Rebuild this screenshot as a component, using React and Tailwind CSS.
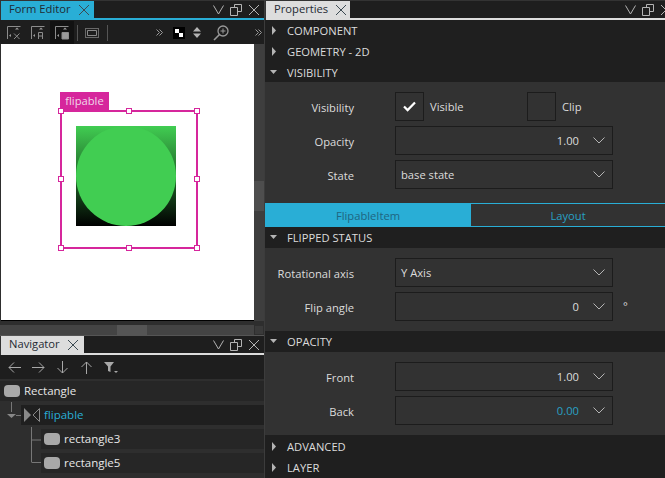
const FONT = "font-['Open_Sans','Noto_Sans',sans-serif]"

function Cross({ className = "" }) {
  return (
    <svg width="12" height="12" viewBox="0 0 12 12" className={className} fill="none" stroke="currentColor" strokeWidth="1">
      <path d="M1 1l10 10M11 1L1 11" />
    </svg>
  )
}

function Chevron() {
  return (
    <svg width="12" height="7" viewBox="0 0 12 7" fill="none" stroke="#b4b4b4" className="ml-[14px] mr-[7px] shrink-0">
      <path d="M.5.5L6 6l5.500-5.500" />
    </svg>
  )
}

function DockButtons({ clipped }) {
  return (
    <div className={`ml-auto flex items-center gap-[6px] self-center text-[#b4b4b4] ${clipped ? "-mr-[7px]" : "pr-[4px]"}`}>
      <svg width="11" height="10" viewBox="0 0 11 10" fill="none" stroke="currentColor">
        <path d="M.5.5L5.500 9l5-8.500" />
      </svg>
      <svg width="12" height="12" viewBox="0 0 12 12" fill="none" stroke="currentColor">
        <path d="M.5 3.500h7v8h-7zM4.500 3V.5h7v7H8" />
      </svg>
      <Cross />
    </div>
  )
}

function Tab({ label, active, width }) {
  return (
    <div className={`flex h-[17px] shrink-0 items-center gap-[7px] pl-[8px] text-[11.2px] text-[#1f2a33] ${width} ${active ? "bg-[#29aed6]" : "bg-[#dddddd]"}`}>
      <span>{label}</span>
      <Cross className="text-[#3c4a52]" />
    </div>
  )
}

function TitleBar({ label, active, width, clipped, flush }) {
  return (
    <div className={`shrink-0 bg-[#333333] pl-px ${flush ? "" : "pt-px"}`}>
      <div className={`flex h-[19px] items-start border-b-2 bg-[#1e1e1e] ${active ? "border-[#29aed6]" : "border-[#dddddd]"}`}>
        <Tab label={label} active={active} width={width} />
        <DockButtons clipped={clipped} />
      </div>
    </div>
  )
}

function Section({ label, open, h = "h-[21px]" }) {
  return (
    <div className={`flex shrink-0 items-center bg-[#1f1f1f] pl-[5px] text-[11.2px] text-[#dcdcdc] ${h}`}>
      <span className="flex w-[17px] items-center">
        {open ? (
          <svg width="7" height="5" viewBox="0 0 7 5"><path d="M0 0h7L3.500 4z" fill="#b4b4b4" /></svg>
        ) : (
          <svg width="5" height="9" viewBox="0 0 5 9" className="ml-[2px]"><path d="M0 0l4 4.500L0 9z" fill="#b4b4b4" /></svg>
        )}
      </span>
      <span className="pt-[2px]">{label}</span>
    </div>
  )
}

function Field({ value, left, blue }) {
  return (
    <div className="flex h-[29px] w-[218px] items-center border border-[#1c1c1c] text-[11.2px]">
      {left ? <span className="pl-[5px] pt-[2px] text-[#dcdcdc]">{value}</span> : null}
      <span className={`ml-auto pt-[2px] ${blue ? "text-[#29a0c4]" : "text-[#dcdcdc]"}`}>{left ? "" : value}</span>
      <Chevron />
    </div>
  )
}

function Row({ label, children }) {
  return (
    <div className="flex h-[29px] items-center">
      <span className="w-[89px] pt-[3px] text-right text-[11.2px] text-[#dcdcdc]">{label}</span>
      <div className="ml-[41px] flex items-center">{children}</div>
    </div>
  )
}

function CheckBox({ checked }) {
  return (
    <div className="flex h-[29px] w-[29px] items-center justify-center border border-[#1c1c1c]">
      {checked ? (
        <svg width="13" height="11" viewBox="0 0 13 11" fill="none" stroke="#ffffff" strokeWidth="2.200">
          <path d="M1 5.500l3.600 3.600L12 1.500" />
        </svg>
      ) : null}
    </div>
  )
}

function Handle({ className }) {
  return <div className={`absolute h-[6px] w-[6px] border border-[#d6269c] bg-white ${className}`} />
}

function ToolIcon({ glyph, dark }) {
  return (
    <div className={`flex h-[23px] w-[24px] items-center justify-center ${dark ? "bg-[#121212]" : ""}`}>
      <svg width="14" height="14" viewBox="0 0 14 14" fill="none" stroke="#8c8c8c">
        <path d="M.5 13V.5h13" />
        <path d="M4 8L2 9.500 4 11z" fill="#9a9a9a" stroke="none" />
        <path d="M10 1.500l2 2H8z" fill="#9a9a9a" stroke="none" />
        {glyph === "x" && <path d="M7 7.500l5.500 5.500M12.500 7.500L7 13" />}
        {glyph === "a" && <path d="M7.500 13V6.500h4V13M7.500 10h4" />}
        {glyph === "b" && <path d="M7 6.500h6.500V13H7z" fill="#9a9a9a" />}
      </svg>
    </div>
  )
}

function FormEditor() {
  return (
    <div className="flex h-[336px] shrink-0 flex-col">
      <TitleBar label="Form Editor" active width="w-[93px]" />
      <div className="flex h-[24px] shrink-0 items-center bg-[#1e1e1e] pl-[2px] pt-px">
        <ToolIcon glyph="x" />
        <ToolIcon glyph="a" />
        <ToolIcon glyph="b" dark />
        <div className="ml-[3px] h-[16px] w-px bg-[#555555]" />
        <svg width="14" height="10" viewBox="0 0 14 10" fill="none" stroke="#b4b4b4" className="ml-[7px]">
          <path d="M.5.5h13v9H.5z" strokeDasharray="1 1" />
          <path d="M2.500 2.500h9v5h-9z" stroke="#8a8a8a" />
        </svg>
        <div className="ml-[8px] h-[16px] w-px bg-[#555555]" />
        <svg width="7" height="7" viewBox="0 0 7 7" fill="none" stroke="#9a9a9a" className="ml-[48px]">
          <path d="M.5.5l3 3-3 3M3.500.5l3 3-3 3" />
        </svg>
        <svg width="12" height="12" viewBox="0 0 12 12" className="ml-[10px]">
          <path d="M0 0h12v12H0z" fill="#000000" />
          <path d="M2 2h4v4H2zM6 6h4v4H6z" fill="#ffffff" />
        </svg>
        <svg width="8" height="11" viewBox="0 0 8 11" className="ml-[8px]" fill="#b4b4b4">
          <path d="M4 0l4 4.500H0zM0 6.500h8L4 11z" />
        </svg>
        <svg width="16" height="16" viewBox="0 0 16 16" fill="none" stroke="#9a9a9a" className="ml-[12px]">
          <circle cx="10" cy="6" r="5" strokeWidth="1.300" />
          <path d="M6.500 9.500L1 15" strokeWidth="1.600" />
          <path d="M7.500 6h5M10 3.500v5" />
        </svg>
        <svg width="7" height="7" viewBox="0 0 7 7" fill="none" stroke="#9a9a9a" className="ml-auto mr-[2px]">
          <path d="M.5.5l3 3-3 3M3.500.5l3 3-3 3" />
        </svg>
      </div>
      <div className="flex min-h-0 flex-1 flex-col">
        <div className="flex h-[277px] shrink-0">
          <div className="relative ml-px flex-1 border-b border-black bg-white">
            <div className="absolute left-[59px] top-[48px] flex h-[18px] w-[49px] items-center justify-center bg-[#d6269c] text-[11.2px] text-[#f0d8e8]">flipable</div>
            <div className="absolute left-[59px] top-[66px] h-[139px] w-[138px] border-2 border-[#d6269c]">
              <Handle className="-left-[4px] -top-[4px]" />
              <Handle className="left-[64px] -top-[4px]" />
              <Handle className="-right-[4px] -top-[4px]" />
              <Handle className="-left-[4px] top-[64px]" />
              <Handle className="-right-[4px] top-[64px]" />
              <Handle className="-left-[4px] -bottom-[4px]" />
              <Handle className="left-[64px] -bottom-[4px]" />
              <Handle className="-right-[4px] -bottom-[4px]" />
            </div>
            <div className="absolute left-[75px] top-[82px] flex h-[100px] w-[100px] bg-linear-to-b/srgb from-[#41cd52] to-black">
              <div className="h-[100px] w-[100px] rounded-full bg-[#41cd52]" />
            </div>
          </div>
          <div className="flex w-[10px] shrink-0 flex-col bg-[#3e3e3e]">
            <div className="mt-[137px] h-[30px] bg-[#4e4e4e]" />
          </div>
        </div>
        <div className="flex min-h-0 flex-1 flex-col bg-[#2e2e2e] pt-[4px]">
          <div className="flex h-[10px] shrink-0 bg-[#444444]">
            <div className="ml-[117px] h-full w-[30px] bg-[#555555]" />
            <div className="ml-auto h-full w-[10px] border border-[#2e2e2e] bg-[#3a3a3a]" />
          </div>
          <div className="h-px shrink-0 bg-[#555555]" />
        </div>
      </div>
    </div>
  )
}

function NavRow({ label, indent, icon, blue }) {
  return (
    <div className={`flex h-[20px] items-center bg-[#262626] ${indent}`}>
      {icon}
      <span className={`text-[11.5px] ${blue ? "text-[#29aed6]" : "text-[#e6e6e6]"}`}>{label}</span>
    </div>
  )
}

function Pill() {
  return <div className="mr-[4px] h-[12px] w-[16px] rounded-[4px] bg-[#a8a8a8]" />
}

function Navigator() {
  return (
    <div className="relative flex min-h-0 flex-1 flex-col bg-[#2e2e2e]">
      <TitleBar label="Navigator" width="w-[83px]" flush />
      <div className="flex h-[24px] shrink-0 items-center gap-[11px] bg-[#1e1e1e] pl-[8px] text-[#a8a8a8]">
        {["M13 6.500H1M6 1.500l-5 5 5 5", "M0 6.500h12M7 1.500l5 5-5 5", "M6.500 0v12M1.500 7l5 5 5-5", "M6.500 13V1M1.500 6l5-5 5 5"].map((d) => (
          <svg key={d} width="13" height="13" viewBox="0 0 13 13" fill="none" stroke="currentColor"><path d={d} /></svg>
        ))}
        <svg width="14" height="13" viewBox="0 0 14 13" fill="#a8a8a8"><path d="M0 1h10L6.500 5.500V11L4 10V5.500zM10 10h4l-2 2z" /></svg>
      </div>
      <div className="mt-[2px] flex flex-col gap-[4px]">
        <NavRow label="Rectangle" indent="pl-[4px]" icon={<Pill />} />
        <div className="relative pl-[21px]">
          <svg width="15" height="20" viewBox="0 0 15 20" className="absolute left-[6px] top-[-3px]" fill="none" stroke="#777777">
            <path d="M5.500 0v10M10 13.500h5" />
            <path d="M1 12h9l-4.500 4z" fill="#888888" stroke="none" />
          </svg>
          <NavRow
            label="flipable"
            indent="!bg-[#1f1f1f] pl-[3px]"
            blue
            icon={
              <svg width="17" height="16" viewBox="0 0 17 16" className="mr-[3px]" fill="none">
                <path d="M0 1l7 7-7 7z" fill="#888888" />
                <path d="M15.500 1.500L9 8l6.500 6.500z" stroke="#888888" />
              </svg>
            }
          />
        </div>
        <div className="relative flex flex-col gap-[4px] pl-[41px]">
          <svg width="12" height="40" viewBox="0 0 12 40" className="absolute left-[31px] -top-[2px]" fill="none" stroke="#777777">
            <path d="M.5 0v35M.5 13H10M.5 35.500H10" />
          </svg>
          <NavRow label="rectangle3" indent="pl-[3px]" icon={<Pill />} />
          <NavRow label="rectangle5" indent="pl-[3px]" icon={<Pill />} />
        </div>
      </div>
    </div>
  )
}

function Properties() {
  return (
    <div className="flex min-w-0 flex-1 flex-col bg-[#323232]">
      <TitleBar label="Properties" width="w-[84px]" clipped />
      <Section label="COMPONENT" />
      <Section label="GEOMETRY - 2D" />
      <Section label="VISIBILITY" open h="h-[20px]" />
      <div className="flex h-[121px] shrink-0 flex-col gap-[5px] pt-[10px]">
        <Row label="Visibility">
          <CheckBox checked />
          <span className="ml-[6px] w-[97px] pt-[2px] text-[11.2px] text-[#dcdcdc]">Visible</span>
          <CheckBox />
          <span className="ml-[6px] pt-[2px] text-[11.2px] text-[#dcdcdc]">Clip</span>
        </Row>
        <Row label="Opacity"><Field value="1.00" /></Row>
        <Row label="State"><Field value="base state" left /></Row>
      </div>
      <div className="flex h-[24px] shrink-0 text-[11.2px]">
        <div className="flex w-[206px] items-center justify-center bg-[#29aed6] pt-[2px] text-[#1f6580]">FlipableItem</div>
        <div className="flex flex-1 items-center justify-center border-y border-[#29aed6] pt-[2px] text-[#29a0c4]">Layout</div>
      </div>
      <Section label="FLIPPED STATUS" open />
      <div className="flex h-[83px] shrink-0 flex-col gap-[5px] pt-[10px]">
        <Row label="Rotational axis"><Field value="Y Axis" left /></Row>
        <Row label="Flip angle">
          <Field value="0" />
          <span className="ml-[10px] text-[11.2px] text-[#dcdcdc]">°</span>
        </Row>
      </div>
      <Section label="OPACITY" open />
      <div className="flex h-[83px] shrink-0 flex-col gap-[5px] pt-[10px]">
        <Row label="Front"><Field value="1.00" /></Row>
        <Row label="Back"><Field value="0.00" blue /></Row>
      </div>
      <Section label="ADVANCED" h="h-[22px]" />
      <Section label="LAYER" />
    </div>
  )
}

export default function App() {
  return (
    <div className={`flex h-[478px] w-[665px] overflow-hidden bg-[#2e2e2e] ${FONT}`}>
      <div className="flex w-[264px] shrink-0 flex-col">
        <FormEditor />
        <Navigator />
      </div>
      <div className="w-px shrink-0 bg-[#3c3c3c]" />
      <Properties />
    </div>
  )
}
